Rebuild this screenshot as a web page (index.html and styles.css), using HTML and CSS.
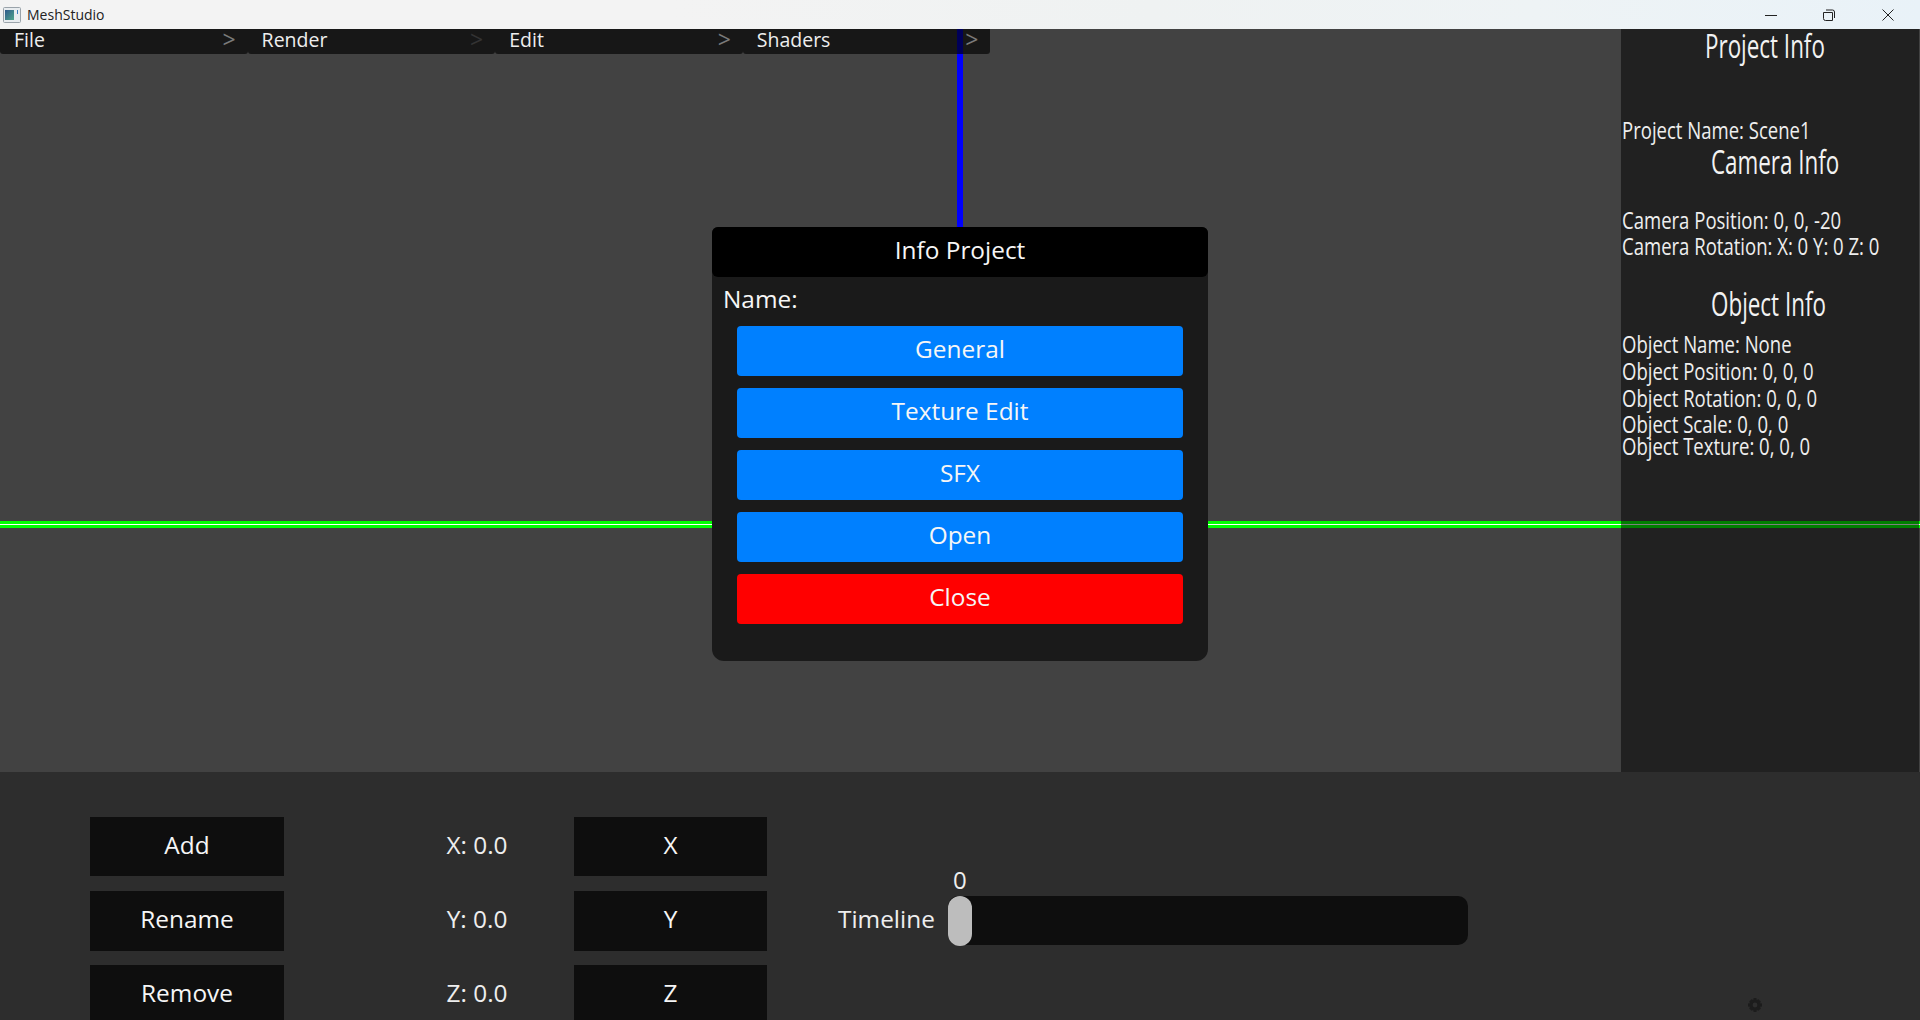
FILE: index.html
```html
<!DOCTYPE html>
<html lang="en">
<head>
    <meta charset="UTF-8">
    <meta name="viewport" content="width=device-width, initial-scale=1.0">
    <title>MeshStudio</title>
    <link rel="stylesheet" href="styles.css">
</head>
<body>
    <header class="titlebar">
        <svg class="app-icon" width="18" height="16" viewBox="0 0 18 16">
            <defs>
                <linearGradient id="appGrad" x1="0" y1="0" x2="1" y2="1">
                    <stop offset="0" stop-color="#2f5a8c"/>
                    <stop offset="1" stop-color="#4fa58a"/>
                </linearGradient>
            </defs>
            <rect x="0.5" y="0.5" width="17" height="15" rx="1" fill="#e8ecef" stroke="#9aa3aa"/>
            <rect x="2" y="3" width="9" height="10" fill="url(#appGrad)"/>
            <rect x="14" y="3" width="1" height="4" fill="#3f7fc0"/>
        </svg>
        <span class="app-name">MeshStudio</span>
        <div class="window-controls">
            <svg width="12" height="12" viewBox="0 0 12 12"><path d="M0 6.5H12" stroke="#222" fill="none"/></svg>
            <svg width="12" height="12" viewBox="0 0 12 12"><path d="M0.5 3.5H9.5V11.5H2.5A2 2 0 0 1 0.5 9.5ZM3 1H9.5A2 2 0 0 1 11.5 3V9" stroke="#222" fill="none"/></svg>
            <svg class="close-icon" width="12" height="12" viewBox="0 0 12 12"><path d="M0.5 0.5L11.5 11.5M11.5 0.5L0.5 11.5" stroke="#222" fill="none"/></svg>
        </div>
    </header>

    <main class="workspace">
        <section class="viewport">
            <div class="axis-z"></div>
            <div class="axis-x"></div>

            <nav class="menu-bar">
                <div class="menu-item"><span>File</span><span class="arrow">&gt;</span></div>
                <div class="menu-item"><span>Render</span><span class="arrow arrow-dim">&gt;</span></div>
                <div class="menu-item"><span>Edit</span><span class="arrow">&gt;</span></div>
                <div class="menu-item"><span>Shaders</span><span class="arrow">&gt;</span></div>
            </nav>

            <aside class="info-panel">
                <h2 class="info-title title-project">Project Info</h2>
                <p class="info-line line-project">Project Name: Scene1</p>
                <h2 class="info-title title-camera">Camera Info</h2>
                <p class="info-line line-campos">Camera Position: 0, 0, -20</p>
                <p class="info-line line-camrot">Camera Rotation: X: 0 Y: 0 Z: 0</p>
                <h2 class="info-title title-object">Object Info</h2>
                <p class="info-line line-objname">Object Name: None</p>
                <p class="info-line">Object Position: 0, 0, 0</p>
                <p class="info-line">Object Rotation: 0, 0, 0</p>
                <p class="info-line">Object Scale: 0, 0, 0</p>
                <p class="info-line line-texture">Object Texture: 0, 0, 0</p>
            </aside>

            <div class="modal">
                <div class="modal-header">Info Project</div>
                <div class="modal-name">Name:</div>
                <div class="modal-buttons">
                    <button class="modal-btn">General</button>
                    <button class="modal-btn">Texture Edit</button>
                    <button class="modal-btn">SFX</button>
                    <button class="modal-btn">Open</button>
                    <button class="modal-btn btn-close">Close</button>
                </div>
            </div>
        </section>

        <section class="bottom-panel">
            <div class="controls">
                <button class="tool-btn">Add</button>
                <div class="coord">X: 0.0</div>
                <button class="tool-btn">X</button>
                <div class="spacer"></div>

                <button class="tool-btn">Rename</button>
                <div class="coord">Y: 0.0</div>
                <button class="tool-btn">Y</button>
                <div class="timeline">
                    <span class="timeline-label">Timeline</span>
                    <div class="slider">
                        <span class="slider-value">0</span>
                        <div class="slider-thumb"></div>
                    </div>
                </div>

                <button class="tool-btn">Remove</button>
                <div class="coord">Z: 0.0</div>
                <button class="tool-btn">Z</button>
            </div>
            <svg class="gear" width="14" height="14" viewBox="0 0 14 14">
                <path fill-rule="evenodd" fill="#1c1c1c" d="M5.6 0H8.4L8.8 2L10.4 1.2L12.8 3.6L12 5.2L14 5.6V8.4L12 8.8L12.8 10.4L10.4 12.8L8.8 12L8.4 14H5.6L5.2 12L3.6 12.8L1.2 10.4L2 8.8L0 8.4V5.6L2 5.2L1.2 3.6L3.6 1.2L5.2 2ZM7 4.6A2.4 2.4 0 1 0 7 9.4A2.4 2.4 0 1 0 7 4.6Z"/>
            </svg>
        </section>
    </main>
</body>
</html>
```

FILE: styles.css
```css
* {
    box-sizing: border-box;
}
html, body {
    height: 100%;
}
body {
    margin: 0;
    display: flex;
    flex-direction: column;
    overflow: hidden;
    font-family: "Open Sans", "Noto Sans", sans-serif;
    color: #f6f6f6;
    background: #2d2d2d;
}
button {
    font-family: inherit;
    color: inherit;
    border: none;
    padding: 0;
}

/* window title bar */
.titlebar {
    height: 29px;
    flex: none;
    display: flex;
    align-items: center;
    padding-left: 3px;
    background: linear-gradient(90deg, #f3f3f3 0%, #f3f3f3 35%, #eff2f2 60%, #eef3f5 80%, #e9f2f8 100%);
    color: #222;
}
.app-icon {
    margin-right: 6px;
}
.app-name {
    font-size: 14px;
}
.window-controls {
    margin-left: auto;
    display: flex;
    gap: 46px;
    padding-right: 26px;
}
.close-icon {
    margin-left: 1px;
}

/* main area */
.workspace {
    flex: 1;
    display: flex;
    flex-direction: column;
    min-height: 0;
}
.viewport {
    height: 743px;
    flex: none;
    position: relative;
    background: #424242;
}
.axis-z {
    position: absolute;
    left: 957px;
    top: 0;
    width: 6px;
    height: 198px;
    background: #0000ff;
}
.axis-x {
    position: absolute;
    left: 0;
    right: 0;
    top: 492px;
    height: 7px;
    background: linear-gradient(#0f0 0, #0f0 3px, #fff 3px, #fff 4px, #0f0 4px);
}

/* menu bar */
.menu-bar {
    position: absolute;
    left: 0;
    top: 0;
    display: flex;
}
.menu-item {
    width: 247.6px;
    height: 25px;
    display: flex;
    justify-content: space-between;
    align-items: center;
    padding: 0 12px 4px 14px;
    font-size: 19.5px;
    background: rgba(0, 0, 0, 0.65);
    border-radius: 0 0 3px 3px;
    color: #eee;
}
.arrow {
    font-size: 23px;
    line-height: 25px;
    color: #7a7a7a;
}
.arrow-dim {
    color: #333;
}

/* info panel */
.info-panel {
    position: absolute;
    left: 1621px;
    top: 0;
    width: 298px;
    height: 743px;
    background: rgba(0, 0, 0, 0.5);
    padding-left: 1px;
}
.info-title, .info-line {
    white-space: nowrap;
    font-weight: 400;
    transform-origin: 0 0;
}
.info-title {
    margin: 0;
    font-size: 32px;
    line-height: 34px;
    transform: scaleX(0.7);
    color: #f2f2f2;
}
.title-project {
    margin-left: 83px;
}
.title-camera {
    margin: 3.35px 0 0 89px;
}
.title-object {
    margin: 30.4px 0 0 89px;
}
.info-line {
    margin: 4.7px 0 0;
    font-size: 24.4px;
    line-height: 22px;
    transform: scaleX(0.76);
    color: #eee;
}
.line-project {
    margin-top: 56.35px;
}
.line-campos {
    margin-top: 30.3px;
}
.line-camrot {
    margin-top: 3.7px;
}
.line-objname {
    margin-top: 12.35px;
}
.line-texture {
    margin-top: 0;
}

/* project dialog */
.modal {
    position: absolute;
    left: 712px;
    top: 198px;
    width: 496px;
    height: 434px;
    background: #1a1a1a;
    border-radius: 6px 6px 12px 12px;
}
.modal-header {
    height: 50px;
    display: flex;
    align-items: center;
    justify-content: center;
    padding-bottom: 5px;
    background: #000;
    border-radius: 6px;
    font-size: 24.4px;
}
.modal-name {
    height: 49px;
    padding-left: 11px;
    font-size: 24.4px;
    line-height: 44px;
}
.modal-buttons {
    display: flex;
    flex-direction: column;
    gap: 12px;
    padding: 0 25px;
}
.modal-btn {
    height: 50px;
    padding-bottom: 6px;
    background: #0080ff;
    border-radius: 4px;
    font-size: 24.4px;
}
.btn-close {
    background: #f00;
}

/* bottom controls */
.bottom-panel {
    flex: 1;
    position: relative;
    overflow: hidden;
    padding: 45px 0 0 90px;
    background: #2d2d2d;
}
.controls {
    display: grid;
    grid-template-columns: 194px 290px 193px auto;
    grid-template-rows: 59px 60px 60px;
    row-gap: 14.5px;
    justify-content: start;
}
.tool-btn {
    padding-bottom: 5px;
    background: #0e0e0e;
    font-size: 24.4px;
}
.coord {
    display: flex;
    align-items: center;
    justify-content: center;
    padding: 0 0 5px 96px;
    font-size: 24.4px;
    color: #eee;
}
.timeline {
    display: flex;
    align-items: center;
    padding-left: 71px;
}
.timeline-label {
    font-size: 24.4px;
    color: #eee;
    margin: 0 13px 5px 0;
}
.slider {
    position: relative;
    width: 520px;
    height: 49px;
    background: #0e0e0e;
    border-radius: 10px;
}
.slider-thumb {
    position: absolute;
    left: 0;
    top: 0;
    width: 24px;
    height: 50px;
    background: #bdbdbd;
    border-radius: 12px;
}
.slider-value {
    position: absolute;
    left: 0;
    width: 24px;
    bottom: 100%;
    text-align: center;
    font-size: 24px;
    line-height: 32px;
    color: #eee;
}
.gear {
    position: absolute;
    left: 1748px;
    top: 226px;
}
```
